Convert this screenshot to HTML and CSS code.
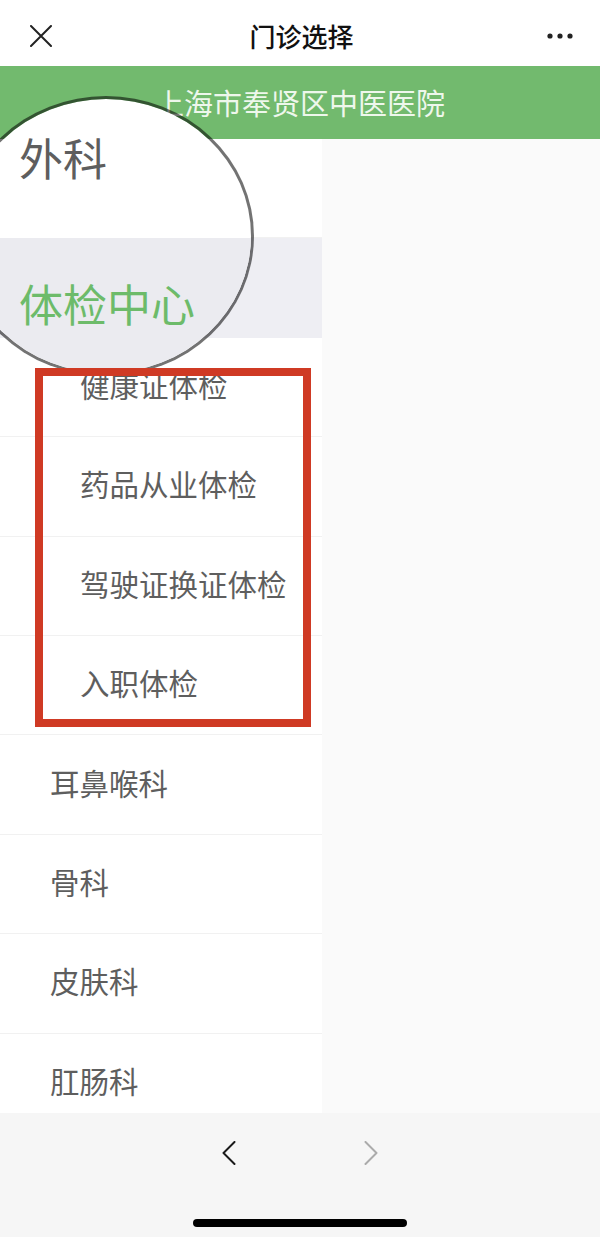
FILE: index.html
```html
<!DOCTYPE html>
<html>
<head>
  <meta charset="utf-8">
  <title>门诊选择</title>
  <link rel="stylesheet" href="styles.css">
</head>
<body>
  <div class="page">
    <!-- Top navigation bar -->
    <div class="nav-bar">
      <svg class="nav-close" width="22" height="22" viewBox="0 0 22 22">
        <path d="M1 1 L21 21 M21 1 L1 21" stroke="#222" stroke-width="2" stroke-linecap="round" fill="none"/>
      </svg>
      <div class="nav-title">门诊选择</div>
      <svg class="nav-more" width="26" height="6" viewBox="0 0 26 6">
        <circle cx="3" cy="3" r="2.6" fill="#222"/>
        <circle cx="13" cy="3" r="2.6" fill="#222"/>
        <circle cx="23" cy="3" r="2.6" fill="#222"/>
      </svg>
    </div>

    <div class="hospital-banner">上海市奉贤区中医医院</div>

    <!-- Department list -->
    <div class="content">
      <div class="dept-list">
        <div class="dept-item">外科</div>
        <div class="dept-item active">体检中心</div>
        <div class="dept-item sub">健康证体检</div>
        <div class="dept-item sub">药品从业体检</div>
        <div class="dept-item sub">驾驶证换证体检</div>
        <div class="dept-item sub">入职体检</div>
        <div class="dept-item">耳鼻喉科</div>
        <div class="dept-item">骨科</div>
        <div class="dept-item">皮肤科</div>
        <div class="dept-item">肛肠科</div>
      </div>
      <div class="dept-detail"></div>
    </div>

    <!-- Browser toolbar -->
    <div class="toolbar">
      <div class="toolbar-nav">
        <svg width="14" height="24" viewBox="0 0 14 24">
          <polyline points="12.5,1 1.5,12 12.5,23" stroke="#1a1a1a" stroke-width="2" fill="none" stroke-linecap="round" stroke-linejoin="round"/>
        </svg>
        <svg width="14" height="24" viewBox="0 0 14 24">
          <polyline points="1.5,1 12.5,12 1.5,23" stroke="#ababab" stroke-width="2" fill="none" stroke-linecap="round" stroke-linejoin="round"/>
        </svg>
      </div>
      <div class="home-indicator"></div>
    </div>

    <!-- Magnifier over the top of the list -->
    <div class="magnifier">
      <div class="lens-row">外科</div>
      <div class="lens-row active">体检中心</div>
    </div>

    <!-- Red highlight around the sub items -->
    <div class="highlight-box"></div>
  </div>
</body>
</html>
```

FILE: styles.css
```css
body {
  margin: 0;
  font-family: "Noto Sans CJK SC", "Noto Sans", sans-serif;
}

.page {
  position: relative;
  width: 600px;
  height: 1237px;
  overflow: hidden;
  background-color: #ffffff;
}

/* Top navigation bar */
.nav-bar {
  height: 66px;
  box-sizing: border-box;
  padding: 6px 27px 0 30px;
  display: grid;
  grid-template-columns: 1fr auto 1fr;
  align-items: center;
}

.nav-close {
  justify-self: start;
}

.nav-more {
  justify-self: end;
}

.nav-title {
  font-size: 26px;
  font-weight: 500;
  color: #111111;
  line-height: 30px;
}

.hospital-banner {
  height: 73px;
  line-height: 73px;
  background-color: #72ba6e;
  color: #eef7ec;
  font-size: 29px;
  text-align: center;
}

/* List area */
.content {
  height: 974px;
  display: flex;
  overflow: hidden;
}

.dept-list {
  width: 322px;
  background-color: #ffffff;
}

.dept-detail {
  flex: 1;
  background-color: #fafafa;
}

.dept-item {
  height: 99.4px;
  box-sizing: border-box;
  border-bottom: 1px solid #f1f1f1;
  display: flex;
  align-items: center;
  padding: 0 0 6px 50px;
  font-size: 29.5px;
  color: #5e5e5e;
}

.dept-item.active {
  background-color: #eeeef3;
  color: #6dbb6a;
  border-bottom-color: #eeeef3;
}

.dept-item.sub {
  padding-left: 80px;
}

/* Bottom toolbar */
.toolbar {
  height: 124px;
  box-sizing: border-box;
  padding-top: 28px;
  background-color: #f6f6f6;
  display: flex;
  flex-direction: column;
  align-items: center;
}

.toolbar-nav {
  display: flex;
  gap: 128px;
}

.home-indicator {
  width: 214px;
  height: 8px;
  margin-top: 54px;
  border-radius: 4px;
  background-color: #000000;
}

/* Magnifier */
.magnifier {
  position: absolute;
  left: -42px;
  top: 96px;
  width: 296px;
  height: 280px;
  box-sizing: border-box;
  border: 3px solid rgba(0, 0, 0, 0.55);
  border-radius: 50%;
  background-color: #ffffff;
  background-clip: padding-box;
  overflow: hidden;
  display: flex;
  flex-direction: column;
  z-index: 2;
}

.lens-row {
  height: 139px;
  flex-shrink: 0;
  box-sizing: border-box;
  padding: 36px 0 0 58px;
  font-size: 44px;
  line-height: 44px;
  color: #5e5e5e;
}

.lens-row.active {
  flex: 1;
  padding-top: 43px;
  background-color: #ebebf0;
  color: #6dbb6a;
}

.highlight-box {
  position: absolute;
  left: 35px;
  top: 368px;
  width: 276px;
  height: 359px;
  box-sizing: border-box;
  border: 8px solid #cf3a24;
  z-index: 3;
}
```
